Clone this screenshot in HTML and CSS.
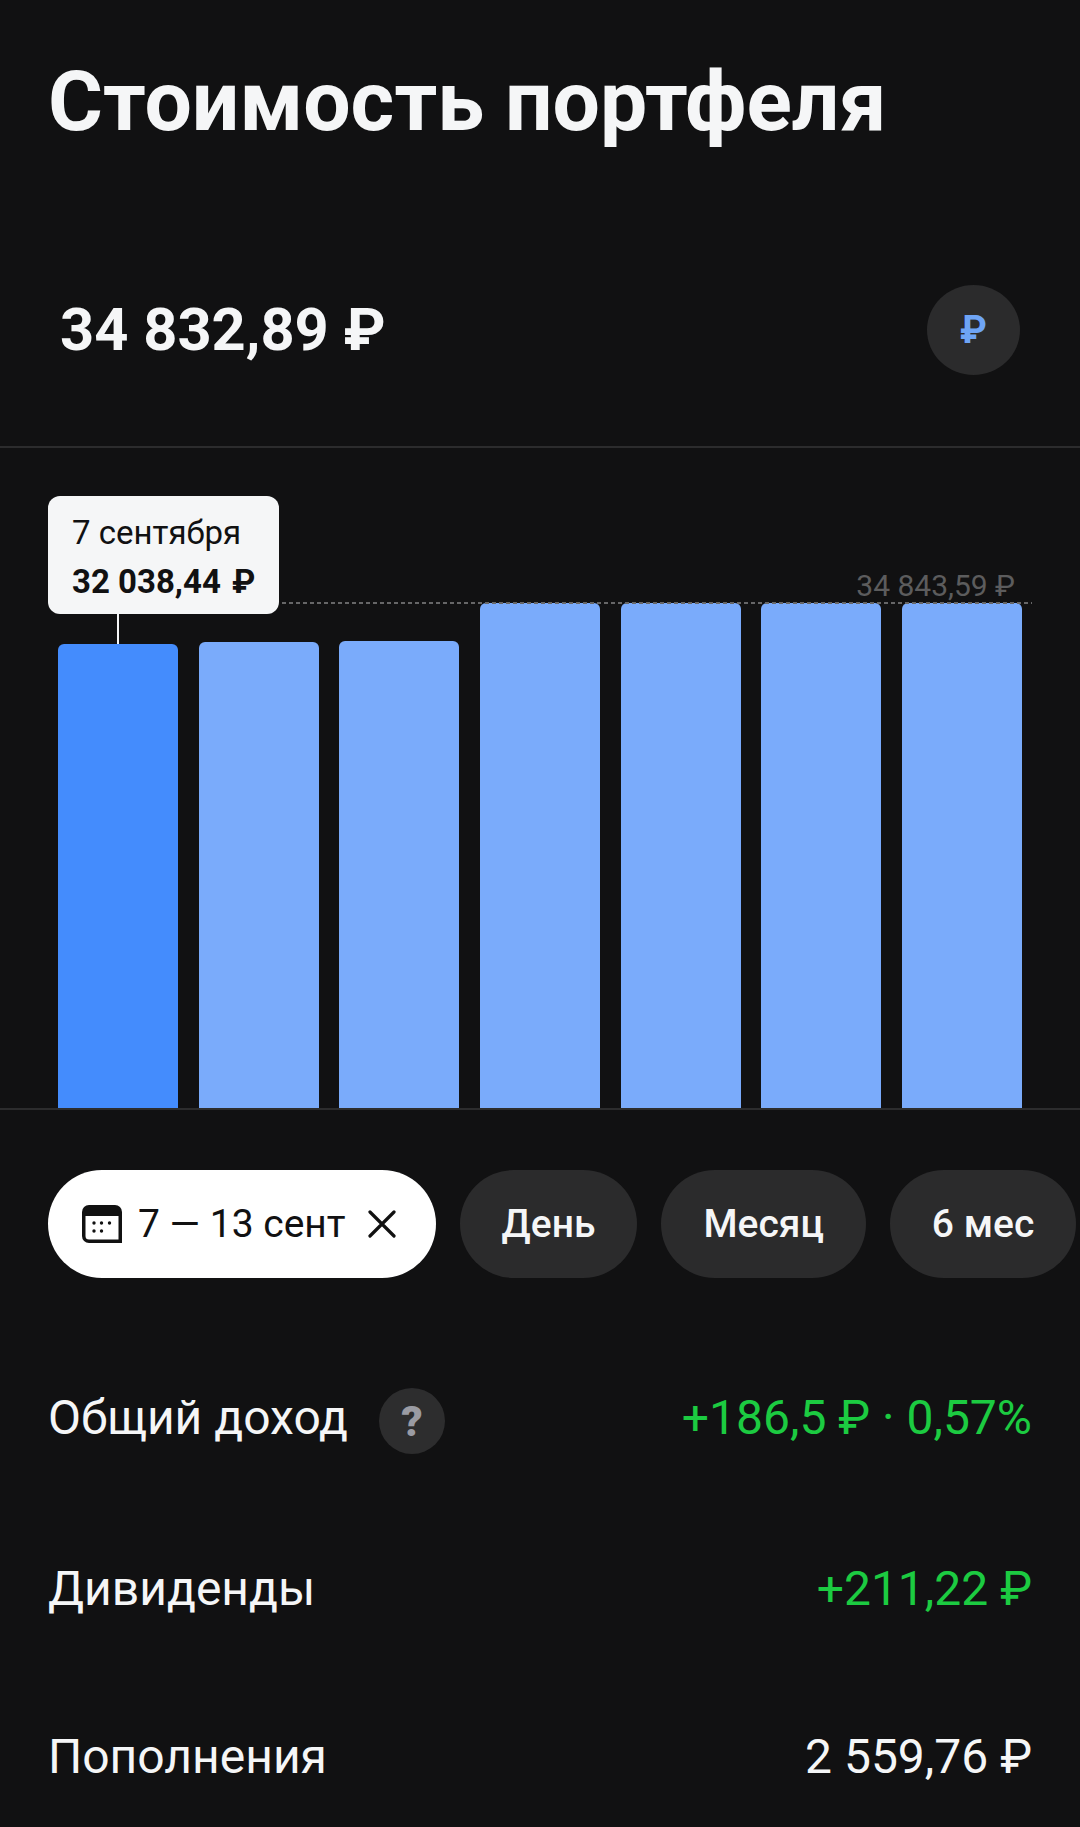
FILE: index.html
```html
<!DOCTYPE html>
<html lang="ru">
<head>
<meta charset="utf-8">
<title>Стоимость портфеля</title>
<link rel="stylesheet" href="styles.css">
</head>
<body>
<main class="page">
  <h1 class="title">Стоимость портфеля</h1>
  <section class="total">
    <span class="total-value">34 832,89 ₽</span>
    <button class="currency" type="button">₽</button>
  </section>
  <section class="chart">
    <div class="max-line"></div>
    <div class="max-label">34 843,59 ₽</div>
    <div class="tooltip">
      <div class="tooltip-date">7 сентября</div>
      <div class="tooltip-value">32 038,44 <span class="tooltip-rub">₽</span></div>
    </div>
    <div class="stem"></div>
    <div class="bars">
      <div class="bar bar-active" style="height:464px"></div>
      <div class="bar" style="height:466px"></div>
      <div class="bar" style="height:467px"></div>
      <div class="bar" style="height:505px"></div>
      <div class="bar" style="height:505px"></div>
      <div class="bar" style="height:505px"></div>
      <div class="bar" style="height:505px"></div>
    </div>
  </section>
  <nav class="pills">
    <div class="pill pill-active">
      <svg class="cal" viewBox="0 0 40 38" aria-hidden="true">
        <path d="M7 0H33A7 7 0 0 1 40 7V38H7A7 7 0 0 1 0 31V7A7 7 0 0 1 7 0Z" fill="#111"/>
        <path d="M3.5 11H36.500V34.500H7A3.500 3.500 0 0 1 3.500 31Z" fill="#fff"/>
        <g fill="#111">
          <circle cx="12" cy="18" r="1.700"/><circle cx="19.500" cy="18" r="1.700"/><circle cx="27.500" cy="18" r="1.700"/>
          <circle cx="12" cy="26" r="1.700"/><circle cx="19.500" cy="26" r="1.700"/>
        </g>
      </svg>
      <span>7 — 13 сент</span>
      <svg class="close" viewBox="0 0 28 28" aria-hidden="true">
        <path d="M2 2L26 26M26 2L2 26" stroke="#111" stroke-width="3.200" stroke-linecap="round" fill="none"/>
      </svg>
    </div>
    <div class="pill">День</div>
    <div class="pill">Месяц</div>
    <div class="pill">6 мес</div>
  </nav>
  <section class="stats">
    <div class="row">
      <div class="row-label">Общий доход <span class="help">?</span></div>
      <div class="row-value positive">+186,5 ₽ · 0,57%</div>
    </div>
    <div class="row">
      <div class="row-label">Дивиденды</div>
      <div class="row-value positive">+211,22 ₽</div>
    </div>
    <div class="row">
      <div class="row-label">Пополнения</div>
      <div class="row-value">2 559,76 ₽</div>
    </div>
  </section>
</main>
</body>
</html>
```
FILE: styles.css
```css
* { box-sizing: border-box; }
html, body { margin: 0; padding: 0; background: #111112; }
body { font-family: Roboto, "Noto Sans", sans-serif; color: #f5f6f7; }
.page { width: 1080px; height: 1827px; overflow: hidden; }
.title { margin: 0; padding: 54px 0 0 48px; font-size: 84px; line-height: 96px; font-weight: 700; height: 150px; }
.total { height: 298px; padding: 135px 60px 0 60px; display: flex; justify-content: space-between; align-items: flex-start; border-bottom: 2px solid #2c2c2d; }
.total-value { font-size: 59.600px; line-height: 90px; font-weight: 700; }
.currency { width: 93px; height: 90px; border: 0; border-radius: 50%; background: #2b2b2c; color: #6ea4f5; font: 700 38px/90px Roboto, sans-serif; padding: 0; }
.chart { position: relative; height: 662px; border-bottom: 2px solid #2c2c2d; display: flex; flex-direction: column; justify-content: flex-end; }
.bars { display: flex; gap: 20.670px; padding-left: 58px; align-items: flex-end; }
.bar { width: 120px; background: #7aabfb; border-radius: 6px 6px 0 0; }
.bar-active { background: #448cfd; }
.max-line { position: absolute; left: 282px; width: 750px; top: 154px; height: 2px; background: repeating-linear-gradient(90deg, #666667 0 4px, transparent 4px 7px); }
.max-label { position: absolute; right: 65px; top: 120px; font-size: 30px; line-height: 36px; color: #5c5c5d; }
.tooltip { position: absolute; left: 48px; top: 48px; width: 231px; height: 118px; padding: 11px 0 0 24px; background: #f5f6f7; border-radius: 12px; color: #111112; z-index: 1; }
.tooltip-date { font-size: 33px; line-height: 51px; }
.tooltip-value { font-size: 33px; line-height: 48px; font-weight: 700; }
.tooltip-rub { margin-left: 3px; }
.stem { position: absolute; left: 117px; top: 166px; width: 2px; height: 30px; background: #f5f6f7; }
.pills { display: flex; gap: 24px; padding: 60px 0 0 48px; height: 222px; }
.pill { height: 108px; padding: 0 42px; border-radius: 54px; background: #2b2b2c; display: flex; align-items: center; font-size: 39px; font-weight: 500; flex: none; }
.pill-active { background: #fff; color: #111112; font-weight: 400; padding: 0 40px 0 34px; gap: 16px; }
.cal { width: 40px; height: 38px; flex: none; }
.close { width: 28px; height: 28px; flex: none; margin-left: 6px; }
.stats { padding: 0 48px 0 48px; }
.row { display: flex; justify-content: space-between; align-items: center; font-size: 48px; }
.row:nth-child(1) { height: 170px; }
.row:nth-child(2) { height: 172px; }
.row:nth-child(3) { height: 164px; }
.row-label { display: flex; align-items: center; gap: 31px; }
.help { width: 66px; height: 66px; margin-top: 8px; border-radius: 50%; background: #2d2d2e; color: #9a9ba3; display: flex; align-items: center; justify-content: center; font-size: 42px; font-weight: 900; }
.positive { color: #1ccb41; }
```
